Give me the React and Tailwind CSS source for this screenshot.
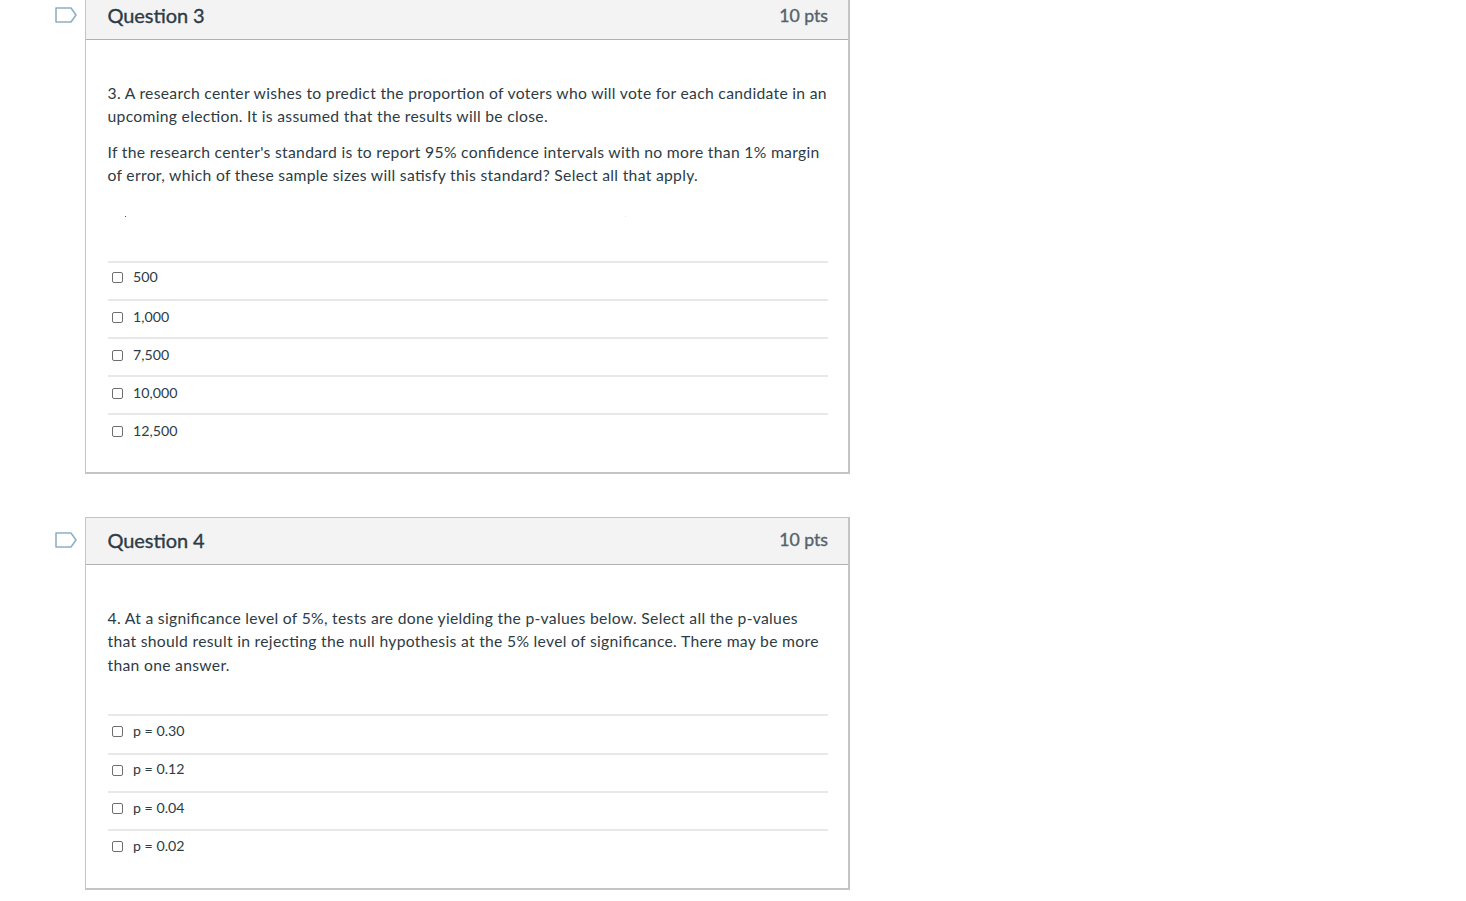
const font = { fontFamily: "Lato, sans-serif" };

function Tag() {
  return (
    <svg className="w-[23px] h-[18px] shrink-0" viewBox="0 0 23 18" fill="none">
      <path d="M1 2 H16 L21 9 L16 16 H1 Z" stroke="#8fb0c6" strokeWidth="1.6" strokeLinejoin="round" />
    </svg>
  );
}

function Option({ label, shift, labelShift }) {
  return (
    <div className={`flex items-center h-[38.2px] border-t-2 border-[#e8e8e8] pl-[4.5px] ${shift}`}>
      <span className="w-[11px] h-[11px] rounded-[2px] border border-[#6f6f6f] bg-white shrink-0" />
      <span className={`ml-[10px] text-[14.2px] leading-[20px] text-[#2d3b45] ${labelShift || ""}`}>{label}</span>
    </div>
  );
}

function Question({ title, paragraphs, options, gapClass, bodyTop, ptsShift, children }) {
  return (
    <div className="relative">
      <div className="absolute left-[-30.5px] top-[14px]"><Tag /></div>
      <div className="relative w-[765px] border-2 border-t border-l border-[#c4c4c4]">
        <div className="h-[47px] flex items-center justify-between pl-[21.5px] pr-[20px] bg-[#f3f3f3] border-b border-[#b0b0b0]">
          <span className="text-[20px] tracking-[-0.08px] [font-feature-settings:'liga'_1] text-[#2d3b45] [-webkit-text-stroke:0.35px_#2d3b45] -translate-y-[1px]">{title}</span>
          <span className={`text-[17.7px] text-[#55626c] [-webkit-text-stroke:0.35px_#55626c] ${ptsShift || ""}`}>10 pts</span>
        </div>
        <div className={`pl-[21.5px] pr-[20px] pb-[21px] ${bodyTop}`}>
          {paragraphs.map((p, i) => (
            <p key={i} className={`text-[15.7px] tracking-[0.3px] [font-feature-settings:'liga'_1] leading-[23.5px] text-[#2d3b45] ${i ? "mt-[12px]" : ""}`}>{p}</p>
          ))}
          <div className={gapClass}>
            {options.map((o) => <Option key={o.label} label={o.label} shift={o.shift} labelShift={o.labelShift} />)}
          </div>
        </div>
        {children}
      </div>
    </div>
  );
}

export default function App() {
  return (
    <div className="h-[901px] overflow-hidden bg-white" style={font}>
      <div className="ml-[85px] -mt-[8px] flex flex-col gap-[43px]">
        <Question
          title="Question 3"
          bodyTop="pt-[41.5px]"
          gapClass="mt-[73px]"
          paragraphs={[
            "3. A research center wishes to predict the proportion of voters who will vote for each candidate in an upcoming election. It is assumed that the results will be close.",
            "If the research center's standard is to report 95% confidence intervals with no more than 1% margin of error, which of these sample sizes will satisfy this standard? Select all that apply.",
          ]}
          options={[
            { label: "500", shift: "pb-[6px]", labelShift: "-translate-y-px" },
            { label: "1,000", shift: "pb-[2px]", labelShift: "-translate-y-px" },
            { label: "7,500", shift: "pb-[3px]" },
            { label: "10,000", shift: "pb-[4px]" },
            { label: "12,500", shift: "pb-[4px]" },
          ]}
        >
          <span className="absolute left-[39px] top-[223px] w-px h-px bg-[#3a4a9a]" />
          <span className="absolute left-[539px] top-[223px] w-px h-px bg-[#e4e4e4]" />
        </Question>
        <Question
          title="Question 4"
          bodyTop="pt-[41.2px]"
          ptsShift="-translate-y-px"
          gapClass="mt-[37.3px]"
          paragraphs={[
            "4. At a significance level of 5%, tests are done yielding the p-values below. Select all the p-values that should result in rejecting the null hypothesis at the 5% level of significance. There may be more than one answer.",
          ]}
          options={[
            { label: "p = 0.30", shift: "pb-[6px]", labelShift: "-translate-y-px" },
            { label: "p = 0.12", shift: "pb-[5px]", labelShift: "-translate-y-px" },
            { label: "p = 0.04", shift: "pb-[5px]" },
            { label: "p = 0.02", shift: "pb-[5px]", labelShift: "-translate-y-px" },
          ]}
        />
      </div>
    </div>
  );
}
